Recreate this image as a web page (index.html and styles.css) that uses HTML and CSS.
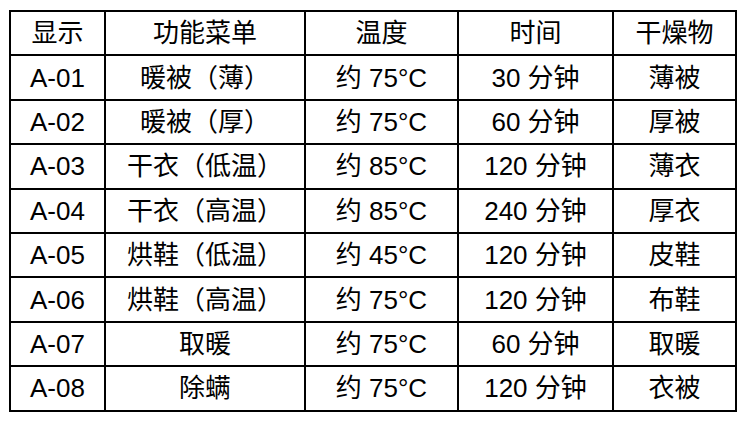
FILE: index.html
```html
<!DOCTYPE html>
<html lang="zh-CN">
<head>
<meta charset="utf-8">
<link rel="stylesheet" href="styles.css">
</head>
<body>
<div class="wrap">
<table class="grid">
<colgroup>
<col class="c1"><col class="c2"><col class="c3"><col class="c4"><col class="c5">
</colgroup>
<thead>
<tr><th>显示</th><th>功能菜单</th><th>温度</th><th>时间</th><th>干燥物</th></tr>
</thead>
<tbody>
<tr><td>A-01</td><td>暖被（薄）</td><td>约 75°C</td><td>30 分钟</td><td>薄被</td></tr>
<tr><td>A-02</td><td>暖被（厚）</td><td>约 75°C</td><td>60 分钟</td><td>厚被</td></tr>
<tr><td>A-03</td><td>干衣（低温）</td><td>约 85°C</td><td>120 分钟</td><td>薄衣</td></tr>
<tr><td>A-04</td><td>干衣（高温）</td><td>约 85°C</td><td>240 分钟</td><td>厚衣</td></tr>
<tr><td>A-05</td><td>烘鞋（低温）</td><td>约 45°C</td><td>120 分钟</td><td>皮鞋</td></tr>
<tr><td>A-06</td><td>烘鞋（高温）</td><td>约 75°C</td><td>120 分钟</td><td>布鞋</td></tr>
<tr><td>A-07</td><td>取暖</td><td>约 75°C</td><td>60 分钟</td><td>取暖</td></tr>
<tr><td>A-08</td><td>除螨</td><td>约 75°C</td><td>120 分钟</td><td>衣被</td></tr>
</tbody>
</table>
</div>
</body>
</html>
```
FILE: styles.css
```css
html, body {
  margin: 0;
  padding: 0;
  background: #ffffff;
}
.wrap {
  padding: 10px 0 0 9px;
}
.grid {
  border-collapse: collapse;
  table-layout: fixed;
  width: 726px;
  font-family: "Liberation Sans", "Noto Sans CJK SC", sans-serif;
  font-size: 26px;
  color: #000000;
}
.c1 { width: 95px; }
.c2 { width: 200px; }
.c3 { width: 153px; }
.c4 { width: 155px; }
.c5 { width: 123px; }
.grid th, .grid td {
  border: 2px solid #000000;
  height: 42.4px;
  padding: 0;
  text-align: center;
  vertical-align: middle;
  font-weight: 400;
  line-height: 1;
  white-space: nowrap;
}
```
